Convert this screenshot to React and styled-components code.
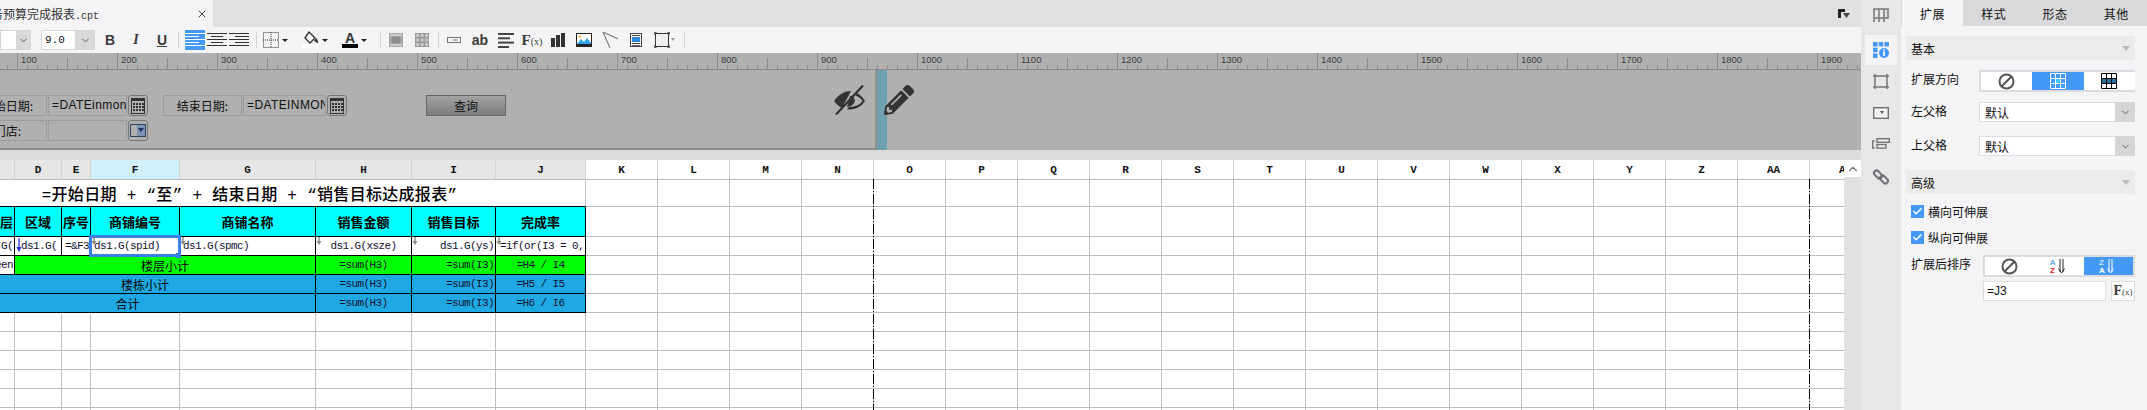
import React from "react";
import styled, { createGlobalStyle } from "styled-components";
import { ChevronDown, ChevronUp, Check, X } from "lucide-react";
import { FaPencilAlt } from "react-icons/fa";

const CJK = `"Noto Sans CJK SC", "Liberation Sans", sans-serif`;
const MONO = `"Liberation Mono", "Noto Sans CJK SC", monospace`;
const BLUE = "#4499f7";

const GlobalStyle = createGlobalStyle`
  html, body { margin: 0; padding: 0; overflow: hidden; }
  body { font-family: ${CJK}; font-size: 12px; color: #111; }
  * { box-sizing: border-box; }
`;

const Page = styled.div`
  display: flex;
  width: 2147px;
  height: 410px;
  overflow: hidden;
  background: #f4f4f7;
`;

const Main = styled.div`
  display: flex;
  flex-direction: column;
  width: 1861px;
  min-width: 0;
`;

/* top tabs */
const TabBar = styled.div`
  display: flex;
  justify-content: space-between;
  align-items: center;
  height: 27px;
  background: #e0e0e3;
  padding-right: 11px;
`;

const FileTab = styled.div`
  display: flex;
  align-items: center;
  width: 213px;
  height: 27px;
  background: #f4f4f7;
  padding-left: 4px;
  overflow: hidden;
  color: #333;
`;

const FileName = styled.span`
  flex: 1;
  margin-left: -13px;
  white-space: nowrap;
  em { font-family: ${MONO}; font-style: normal; font-size: 10px; }
`;

const CloseIcon = styled(X)`
  margin-right: 5px;
  color: #444;
`;

/* toolbar */
const Toolbar = styled.div`
  display: flex;
  align-items: center;
  height: 26px;
  background: #f4f4f7;
`;

const ComboBox = styled.div`
  display: flex;
  height: 20px;
  width: ${p => p.$w}px;
  margin-left: ${p => p.$ml || 0}px;
  background: #fff;
  border: 1px solid #d8d8db;
  align-items: center;
  font-family: ${MONO};
  font-size: 11px;
  padding-left: ${p => (p.$text ? 3 : 0)}px;
`;

const ComboCaret = styled.div`
  display: flex;
  align-items: center;
  justify-content: center;
  width: ${p => p.$w}px;
  height: 20px;
  margin-left: auto;
  margin-right: -1px;
  background: #d8d8db;
  color: #555;
`;

const Slot = styled.div`
  display: flex;
  align-items: center;
  justify-content: center;
  flex: none;
  width: ${p => p.$w}px;
  height: 20px;
  margin-left: ${p => p.$ml || 0}px;
  background: ${p => (p.$active ? BLUE : "transparent")};
  color: #444;
`;

const TextTool = styled.span`
  font-family: ${p => (p.$serif ? `"Liberation Serif", serif` : `"Liberation Sans", sans-serif`)};
  font-weight: ${p => (p.$plain ? 400 : 700)};
  font-style: ${p => (p.$italic ? "italic" : "normal")};
  text-decoration: ${p => (p.$under ? "underline" : "none")};
  font-size: ${p => p.$size || 14}px;
  color: #3a3a3a;
  white-space: nowrap;
`;

const Sep = styled.div`
  flex: none;
  width: 1px;
  height: 16px;
  background: #d2d2d6;
  margin-left: ${p => p.$ml}px;
`;

/* ruler */
const Ruler = styled.div`
  display: flex;
  height: 17px;
  flex: none;
  background: #b0b0b0;
  border-bottom: 1px solid #8c8c8c;
  overflow: hidden;
`;

const RulerMark = styled.div`
  position: relative;
  flex: none;
  width: 100px;
  height: 16px;
  padding: 1px 0 0 3px;
  margin-left: ${p => p.$ml || 0}px;
  border-left: 1px solid #8c8c8c;
  font-family: "Liberation Sans", sans-serif;
  font-size: 9.5px;
  line-height: 11px;
  color: #3c3c3c;
  background: repeating-linear-gradient(90deg, #8c8c8c 0 1px, transparent 1px 10px) 9px 100% / 100% 4px no-repeat;
  &::after {
    content: "";
    position: absolute;
    left: 49px;
    bottom: 0;
    width: 1px;
    height: 11px;
    background: #8c8c8c;
  }
`;

/* parameter pane */
const ParamPane = styled.div`
  display: flex;
  position: relative;
  flex: none;
  height: 80px;
  background: #b0b0b0;
`;

const ParamCanvas = styled.div`
  width: 877px;
  padding-top: 25px;
  border-right: 2px solid #8f8f8f;
  border-bottom: 2px solid #8f8f8f;
  overflow: hidden;
`;

const ParamRow = styled.div`
  display: flex;
  height: 21px;
  gap: 1px;
  margin-left: -32px;
  margin-bottom: 4px;
`;

const ParamLabel = styled.div`
  display: flex;
  align-items: center;
  justify-content: center;
  width: 79px;
  margin-left: ${p => p.$ml || 0}px;
  border: 1px solid #9c9c9c;
`;

const ParamInput = styled.div`
  width: ${p => p.$w}px;
  padding: 0 2px 0 3px;
  border: 1px solid #9c9c9c;
  overflow: hidden;
  white-space: nowrap;
  font-family: "Liberation Sans", sans-serif;
  font-size: 12px;
  letter-spacing: 0.4px;
  line-height: 19px;
`;

const ParamIconButton = styled.div`
  display: flex;
  align-items: center;
  justify-content: center;
  width: 20px;
  border: 1px solid #777;
  border-radius: 3px;
`;

const QueryButton = styled.div`
  display: flex;
  align-items: center;
  justify-content: center;
  width: 80px;
  margin-left: 78px;
  border: 1px solid #666;
  background: linear-gradient(#a2a2a2, #7d7d7d);
`;

const TealStrip = styled.div`
  width: 10px;
  background: #6fa0ae;
`;

const ParamIcon = styled.div`
  position: absolute;
  left: ${p => p.$left}px;
  top: 15px;
  color: #333;
  line-height: 0;
`;

const Gap = styled.div`
  height: 10px;
  flex: none;
  background: #dbdbdd;
`;

/* sheet */
const Sheet = styled.div`
  display: flex;
  flex: 1;
  min-height: 0;
  background: #fff;
  position: relative;
`;

const GridViewport = styled.div`
  position: relative;
  width: 1844px;
  overflow: hidden;
`;

const Grid = styled.div`
  display: grid;
  margin-left: -86px;
  width: max-content;
  grid-template-columns: 26px 35px 40px 47px 29px 89px 136px 96px 84px 90px repeat(18, 72px);
  grid-template-rows: 20px 27px 30px repeat(10, 19px);
`;

const HeadCell = styled.div`
  display: flex;
  align-items: center;
  justify-content: center;
  padding-top: 1px;
  background: ${p => p.$bg};
  border-right: 1px solid #d2d2d2;
  border-bottom: 1px solid #bdbdbd;
  font-family: ${MONO};
  font-size: 11px;
  font-weight: 700;
  color: #111;
`;

const Cell = styled.div`
  position: relative;
  display: flex;
  align-items: center;
  min-width: 0;
  justify-content: ${p => p.$align || "flex-start"};
  grid-column: span ${p => p.$span || 1};
  padding: 0 ${p => (p.$align === "flex-end" ? 1 : 0)}px 0 ${p => (p.$align ? 0 : p.$pad || 3)}px;
  background: ${p => p.$bg || "transparent"};
  border-right: 1px solid ${p => (p.$ink ? "#000" : "#bfbfbf")};
  border-bottom: 1px solid ${p => (p.$ink || p.$inkBelow ? "#000" : "#bfbfbf")};
  font-family: ${MONO};
  font-size: 11px;
  letter-spacing: -0.6px;
  color: #101030;
`;

const CellText = styled.span`
  overflow: hidden;
  white-space: nowrap;
`;

const CjkText = styled.span`
  font-family: ${CJK};
  font-size: ${p => p.$size || 12}px;
  font-weight: ${p => (p.$bold ? 700 : 400)};
  letter-spacing: 0;
  color: #000;
  white-space: nowrap;
`;

const TitleText = styled.span`
  font-family: ${MONO};
  font-size: 16px;
  font-weight: 500;
  letter-spacing: 0.3px;
  color: #000;
  white-space: pre;
`;

const Marker = styled.svg`
  position: absolute;
  z-index: 3;
  left: ${p => p.$left || 0}px;
  top: 0;
`;

const Selection = styled.div`
  position: absolute;
  z-index: 2;
  left: -2px;
  top: -2px;
  right: -2px;
  bottom: -2px;
  border: 3px solid #3a80e8;
  &::after {
    content: "";
    position: absolute;
    right: -3px;
    bottom: -4px;
    width: 5px;
    height: 5px;
    background: #3a80e8;
  }
`;

const PageBreak = styled.div`
  position: absolute;
  z-index: 3;
  left: ${p => p.$left}px;
  top: 19px;
  bottom: 0;
  width: 1px;
  background: repeating-linear-gradient(#000 0 10px, transparent 10px 12px, #000 12px 13px, transparent 13px 15px);
`;

const ScrollBar = styled.div`
  flex: 1;
  background: #e0e0e0;
`;

const ScrollUp = styled.div`
  display: flex;
  align-items: center;
  justify-content: center;
  height: 17px;
  background: #fff;
  color: #777;
`;

/* side icon strip */
const SideStrip = styled.div`
  width: 40px;
  flex: none;
  padding: 0 4px;
  background: #e7e7e8;
`;

const SideItem = styled.div`
  display: flex;
  align-items: center;
  justify-content: center;
  height: 30px;
  margin-top: ${p => p.$mt || 0}px;
  background: ${p => (p.$active ? "#f4f4f7" : "transparent")};
`;

/* right panel */
const Panel = styled.div`
  flex: 1;
  min-width: 0;
  background: #f4f4f7;
`;

const PanelTabs = styled.div`
  display: flex;
  height: 26px;
  background: #d9d9dc;
  padding-left: 1px;
`;

const PanelTab = styled.div`
  flex: 1;
  display: flex;
  align-items: center;
  justify-content: center;
  letter-spacing: 0.5px;
  background: ${p => (p.$active ? "#f4f4f7" : "transparent")};
`;

const PanelBody = styled.div`
  padding: 10px 12px 0 5px;
`;

const SectionBar = styled.div`
  display: flex;
  align-items: center;
  justify-content: space-between;
  height: 24px;
  padding: 0 5px;
  margin-top: ${p => p.$mt || 0}px;
  background: #ebebeb;
  &::after {
    content: "";
    border-left: 4px solid transparent;
    border-right: 4px solid transparent;
    border-top: 5px solid #b9b9bd;
  }
`;

const FieldRow = styled.div`
  display: flex;
  margin-top: ${p => p.$mt}px;
  padding-left: 5px;
`;

const FieldLabel = styled.div`
  flex: none;
  width: ${p => p.$w || 68}px;
  line-height: 18px;
`;

const Segmented = styled.div`
  flex: 1;
  display: flex;
  height: 22px;
  background: #fff;
  border: 2px solid #dcdce0;
  border-right-width: ${p => (p.$open ? 0 : 2)}px;
`;

const Segment = styled.div`
  flex: 1;
  display: flex;
  align-items: center;
  justify-content: center;
  background: ${p => (p.$active ? BLUE : "transparent")};
`;

const SelectBox = styled.div`
  flex: 1;
  display: flex;
  align-items: center;
  height: 20px;
  padding-left: 5px;
  background: #fff;
  border: 1px solid #dcdce0;
  border-right: 0;
`;

const SelectCaret = styled.div`
  display: flex;
  align-items: center;
  justify-content: center;
  width: 20px;
  height: 20px;
  margin-left: auto;
  background: #d5d5d8;
  color: #555;
`;

const CheckRow = styled.div`
  display: flex;
  align-items: center;
  gap: 4px;
  height: 13px;
  margin-top: ${p => p.$mt}px;
  padding-left: 5px;
`;

const CheckMark = styled.div`
  display: flex;
  align-items: center;
  justify-content: center;
  width: 13px;
  height: 13px;
  background: ${BLUE};
  color: #fff;
`;

const FormulaInput = styled.div`
  width: 123px;
  height: 20px;
  padding-left: 3px;
  background: #fff;
  border: 1px solid #dcdce0;
  font-family: "Liberation Sans", sans-serif;
  font-size: 12px;
  line-height: 18px;
`;

const FxButton = styled.div`
  display: flex;
  align-items: center;
  justify-content: center;
  width: 24px;
  height: 20px;
  margin-left: 5px;
  background: #fff;
  border: 1px solid #dcdce0;
`;

const HEAD = "ABCDEFGHIJKLMNOPQRSTUVWXYZ".split("").concat(["AA", "AB"]);

const tail = row =>
  HEAD.slice(10).map(c => <Cell key={`${row}${c}`} />);

const blankRow = row => HEAD.map(c => <Cell key={`${row}${c}`} />);

const headBg = (c, i) => {
  if (c === "F") return "#ceeffb";
  return i < 10 ? "#e6e6e6" : "#fff";
};

const GrayArrow = ({ left }) => (
  <Marker $left={left} width="6" height="9" viewBox="0 0 6 9">
    <path d="M3 0v5" stroke="#888" strokeWidth="1.4" />
    <path d="M0.5 4h5L3 8z" fill="#888" />
  </Marker>
);

const BlueArrow = () => (
  <Marker $left={1} width="6" height="16" viewBox="0 0 6 16">
    <path d="M3 1v10" stroke="#1c2fe0" strokeWidth="1.2" />
    <path d="M0.5 10h5L3 15z" fill="#1c2fe0" />
  </Marker>
);

const BanIcon = () => (
  <svg width="17" height="17" viewBox="0 0 17 17" fill="none" stroke="#555" strokeWidth="2">
    <circle cx="8.5" cy="8.5" r="7" />
    <path d="M3.7 13.3L13.3 3.7" />
  </svg>
);

const MiniGrid = ({ line, cell, row }) => (
  <svg width="16" height="16" viewBox="0 0 16 16">
    {row && <rect x="0" y="5" width="16" height="5" fill={cell} />}
    {!row && <rect x="5" y="5" width="6" height="6" fill={cell} />}
    <path d="M.5.5h15v15H.5zM5.5 0v16M10.5 0v16M0 5.5h16M0 10.5h16" fill="none" stroke={line} />
  </svg>
);

const SortIcon = ({ top, bottom, arrow, underline }) => (
  <svg width="18" height="16" viewBox="0 0 18 16">
    <text x="0" y="7" fontFamily="Liberation Sans" fontSize="8" fill={top}>{underline ? "A" : "Z"}</text>
    <text x="0" y="15" fontFamily="Liberation Sans" fontSize="8" fontWeight="700" fill={bottom}>{underline ? "Z" : "A"}</text>
    <path d="M10 1v13M13 1v13M8.5 10.5l3 4.5 3-4.5" fill="none" stroke={arrow} strokeWidth="1" />
  </svg>
);

const CalendarIcon = () => (
  <svg width="14" height="16" viewBox="0 0 14 16">
    <rect x=".5" y=".5" width="13" height="15" fill="none" stroke="#333" />
    <rect x="0" y="0" width="14" height="3" fill="#333" />
    {[5, 8, 11].map(y =>
      [2, 5, 8, 11].map(x => <rect key={`${x}${y}`} x={x} y={y} width="2" height="2" fill="#333" />)
    )}
  </svg>
);

const DropIcon = () => (
  <svg width="16" height="13" viewBox="0 0 16 13">
    <rect x=".5" y=".5" width="15" height="12" fill="none" stroke="#2d4464" />
    <rect x="7" y="1" width="8" height="11" fill="#7d93b4" />
    <path d="M8 4h6l-3 4z" fill="#1d2f6c" />
  </svg>
);

const EyeOff = () => (
  <svg width="33" height="30" viewBox="0 0 33 30">
    <path d="M1 16C6 9 12 6 18 6l-9 17C6 21.500 3 19 1 16z" fill="#333" />
    <path d="M22 7c4 1.500 7.500 4.500 10 9-3.500 5.500-9 8.500-15 8.500-1 0-2 0-3-.3l2-2.500c6 .5 11-2 13.500-5.700-1.500-2.500-4-4.500-7-5.500z" fill="#333" />
    <path d="M3 29.500L30 .5" stroke="#333" strokeWidth="2.200" />
    <path d="M17 11a6 6 0 0 1 5 5 8 8 0 0 1-4 5l-4 1z" fill="#333" />
  </svg>
);

const BorderTool = () => (
  <svg width="16" height="16" viewBox="0 0 16 16" fill="none" stroke="#333" strokeDasharray="1 1">
    <path d="M.5.5h15v15H.5zM8 0v16M0 8h16" />
  </svg>
);

const SmallCaret = () => (
  <svg width="6" height="3" viewBox="0 0 6 3"><path d="M0 0h6L3 3z" fill="#222" /></svg>
);

const PaintTool = () => (
  <svg width="17" height="18" viewBox="0 0 17 18">
    <rect x="0" y="13" width="16" height="4" fill="#fff" />
    <path d="M7 1l6 6-5 5-5-5z" fill="none" stroke="#333" strokeWidth="1.400" />
    <path d="M8 2l6 5c2 2 2.500 4 2 5-1.500 0-3-2-4-2l2-3z" fill="#333" />
  </svg>
);

const ColorA = () => (
  <svg width="16" height="16" viewBox="0 0 16 16">
    <text x="8" y="11" textAnchor="middle" fontFamily="Liberation Sans" fontWeight="700" fontSize="14" fill="#333">A</text>
    <rect x="0" y="12" width="16" height="4" fill="#000" />
  </svg>
);

const AlignLines = ({ mode, color }) => {
  const widths = [20, 14, 20, 14, 20];
  return (
    <svg width="20" height="14" viewBox="0 0 20 14">
      {widths.map((w, i) => {
        const wide = mode === "center" ? (i % 2 ? 12 : 20) : w;
        const x = mode === "right" ? 20 - wide : mode === "center" ? (20 - wide) / 2 : 0;
        return <rect key={i} x={x} y={i * 3} width={wide} height="1" fill={color} />;
      })}
    </svg>
  );
};

const MergeTool = () => (
  <svg width="14" height="14" viewBox="0 0 14 14">
    <rect width="14" height="14" fill="#a4a4a4" />
    <rect x="1" y="1" width="12" height="2" fill="#cfcfcf" />
    <rect x="1" y="11" width="12" height="2" fill="#cfcfcf" />
    <rect x="3" y="4" width="8" height="6" fill="#8c8c8c" />
  </svg>
);

const GridTool = () => (
  <svg width="14" height="14" viewBox="0 0 14 14">
    <rect width="14" height="14" fill="#999" />
    {[1, 5.500, 10].map(y =>
      [1, 5.500, 10].map(x => <rect key={`${x}${y}`} x={x} y={y} width="3" height="3" fill="#c8c8c8" />)
    )}
  </svg>
);

const FieldTool = () => (
  <svg width="14" height="6" viewBox="0 0 14 6" fill="none" stroke="#777">
    <rect x=".5" y=".5" width="13" height="5" />
    <path d="M6 3h5" />
  </svg>
);

const LinesTool = () => (
  <svg width="16" height="15" viewBox="0 0 16 15" fill="#444">
    <rect width="16" height="2" />
    <rect y="4.300" width="12" height="2" />
    <rect y="8.600" width="16" height="2" />
    <rect y="13" width="11" height="2" />
  </svg>
);

const BarsTool = () => (
  <svg width="14" height="14" viewBox="0 0 14 14" fill="#333">
    <rect y="5" width="4" height="9" />
    <rect x="5" y="2" width="4" height="12" />
    <rect x="10" width="4" height="14" />
  </svg>
);

const ImageTool = () => (
  <svg width="16" height="14" viewBox="0 0 16 14">
    <rect width="16" height="14" fill="#222" />
    <rect x="1" y="1" width="14" height="10" fill="#fff" />
    <path d="M1 11l4-5 3 3 3-4 4 5v1H1z" fill="#2aa5ee" />
    <circle cx="4" cy="3.500" r="1.300" fill="#f5c33a" />
  </svg>
);

const SlantTool = () => (
  <svg width="16" height="16" viewBox="0 0 16 16" fill="none" stroke="#808080" strokeWidth="1.200">
    <path d="M1 0l15 7M1 0l7 16" />
  </svg>
);

const DocTool = () => (
  <svg width="12" height="14" viewBox="0 0 12 14">
    <rect x=".5" y=".5" width="11" height="13" fill="#fff" stroke="#444" />
    <rect x="2" y="2" width="8" height="1" fill="#444" />
    <rect x="2" y="4" width="8" height="5" fill="#2d87d8" />
    <rect x="2" y="10" width="8" height="1" fill="#444" />
    <rect x="2" y="12" width="8" height=".8" fill="#444" />
  </svg>
);

const FrameTool = () => (
  <svg width="21" height="16" viewBox="0 0 21 16">
    <path d="M1.500 1.500h13v13h-13z" fill="#f0f0f0" stroke="#333" />
    <path d="M0 1h3M13 1h3M0 15h3M13 15h3M1 0v3M15 0v3M1 13v3M15 13v3" stroke="#333" />
    <path d="M17 6h4l-2 3z" fill="#999" />
  </svg>
);

const PanelLayoutIcon = () => (
  <svg width="16" height="15" viewBox="0 0 16 15" fill="none" stroke="#777" strokeWidth="1.500">
    <path d="M1 14V1h14v9H1M6 1v13M11 1v13" />
  </svg>
);

const CellInfoIcon = () => (
  <svg width="16" height="16" viewBox="0 0 16 16">
    <g fill={BLUE}>
      <rect width="4.500" height="4.500" />
      <rect x="5.700" width="4.500" height="4.500" />
      <rect x="11.400" width="4.500" height="4.500" />
      <rect y="5.700" width="4.500" height="4.500" />
      <rect y="11.400" width="4.500" height="4.500" />
      <circle cx="11" cy="11" r="5" />
    </g>
    <rect x="10.200" y="9.500" width="1.700" height="4.500" fill="#fff" />
    <rect x="10.200" y="7.300" width="1.700" height="1.500" fill="#fff" />
  </svg>
);

const CropIcon = () => (
  <svg width="16" height="15" viewBox="0 0 16 15" fill="none" stroke="#777" strokeWidth="1.500">
    <path d="M2 2h12v11H2zM0 2h2M14 2h2M0 13h2M14 13h2M2 0v2M14 0v2M2 13v2M14 13v2" />
  </svg>
);

const WidgetIcon = () => (
  <svg width="16" height="12" viewBox="0 0 16 12">
    <rect x=".7" y=".7" width="14.600" height="10.600" fill="#f2f2f2" stroke="#6f6f75" strokeWidth="1.400" />
    <path d="M7 4h4L9 7z" fill="#555" />
  </svg>
);

const LayoutIcon = () => (
  <svg width="18" height="12" viewBox="0 0 18 12" fill="none" stroke="#6f6f75" strokeWidth="1.300">
    <path d="M2.500 3H.7v7h1.800" />
    <rect x="5" y=".7" width="12.300" height="3.600" />
    <rect x="5" y="6.500" width="9" height="3.600" />
  </svg>
);

const ChainIcon = () => (
  <svg width="16" height="16" viewBox="0 0 16 16" fill="none" stroke="#6f6f75" strokeWidth="2">
    <rect x="0.500" y="3" width="9" height="5" rx="2.500" transform="rotate(45 5 5.500)" />
    <rect x="6.500" y="8" width="9" height="5" rx="2.500" transform="rotate(45 11 10.500)" />
  </svg>
);

const MaxIcon = () => (
  <svg width="12" height="9" viewBox="0 0 12 9">
    <path d="M0 0h7v3H3v6H0z" fill="#222" />
    <path d="M5 4h7L8.500 9z" fill="#444" />
  </svg>
);

const Fx = ({ size }) => (
  <TextTool $serif $size={size}>F<TextTool $serif $plain $size={size - 5}>(x)</TextTool></TextTool>
);

const App = () => (
  <Page>
    <GlobalStyle />
    <Main>
      <TabBar>
        <FileTab>
          <FileName>务预算完成报表<em>.cpt</em></FileName>
          <CloseIcon size={12} />
        </FileTab>
        <MaxIcon />
      </TabBar>

      <Toolbar>
        <ComboBox $w={31}>
          <ComboCaret $w={15}><ChevronDown size={11} /></ComboCaret>
        </ComboBox>
        <ComboBox $w={54} $ml={10} $text>
          9.0
          <ComboCaret $w={20}><ChevronDown size={11} /></ComboCaret>
        </ComboBox>
        <Slot $w={26} $ml={2}><TextTool>B</TextTool></Slot>
        <Slot $w={26}><TextTool $italic $serif>I</TextTool></Slot>
        <Slot $w={26}><TextTool $under>U</TextTool></Slot>
        <Sep $ml={3} />
        <Slot $w={20} $ml={6} $active><AlignLines color="#fff" /></Slot>
        <Slot $w={20} $ml={2}><AlignLines mode="center" color="#333" /></Slot>
        <Slot $w={20} $ml={2}><AlignLines mode="right" color="#333" /></Slot>
        <Sep $ml={7} />
        <Slot $w={16} $ml={6}><BorderTool /></Slot>
        <Slot $w={11}><SmallCaret /></Slot>
        <Slot $w={17} $ml={12}><PaintTool /></Slot>
        <Slot $w={11}><SmallCaret /></Slot>
        <Slot $w={16} $ml={12}><ColorA /></Slot>
        <Slot $w={12}><SmallCaret /></Slot>
        <Sep $ml={10} />
        <Slot $w={14} $ml={8}><MergeTool /></Slot>
        <Slot $w={14} $ml={12}><GridTool /></Slot>
        <Sep $ml={9} />
        <Slot $w={14} $ml={8}><FieldTool /></Slot>
        <Slot $w={14} $ml={12}><TextTool $size={14}>ab</TextTool></Slot>
        <Slot $w={16} $ml={11}><LinesTool /></Slot>
        <Slot $w={16} $ml={10}><Fx size={15} /></Slot>
        <Slot $w={14} $ml={11}><BarsTool /></Slot>
        <Slot $w={16} $ml={11}><ImageTool /></Slot>
        <Slot $w={16} $ml={10}><SlantTool /></Slot>
        <Slot $w={12} $ml={12}><DocTool /></Slot>
        <Slot $w={21} $ml={12}><FrameTool /></Slot>
        <Sep $ml={9} />
      </Toolbar>

      <Ruler>
        {Array.from({ length: 20 }, (_, i) => (
          <RulerMark key={i} $ml={i === 0 ? -83 : 0}>{i === 0 ? "" : i * 100}</RulerMark>
        ))}
      </Ruler>

      <ParamPane>
        <ParamCanvas>
          <ParamRow>
            <ParamLabel>开始日期:</ParamLabel>
            <ParamInput $w={79}>=DATEinmon</ParamInput>
            <ParamIconButton><CalendarIcon /></ParamIconButton>
            <ParamLabel $ml={14}>结束日期:</ParamLabel>
            <ParamInput $w={83}>=DATEINMONTH</ParamInput>
            <ParamIconButton><CalendarIcon /></ParamIconButton>
            <QueryButton>查询</QueryButton>
          </ParamRow>
          <ParamRow>
            <ParamLabel>门店:</ParamLabel>
            <ParamInput $w={79} />
            <ParamIconButton><DropIcon /></ParamIconButton>
          </ParamRow>
        </ParamCanvas>
        <TealStrip />
        <ParamIcon $left={833}><EyeOff /></ParamIcon>
        <ParamIcon $left={884}><FaPencilAlt size={30} /></ParamIcon>
      </ParamPane>

      <Gap />

      <Sheet>
        <GridViewport>
          <Grid>
            {HEAD.map((c, i) => <HeadCell key={c} $bg={headBg(c, i)}>{c}</HeadCell>)}

            <Cell $span={10} $align="center" $inkBelow>
              <TitleText>{"=开始日期 + “至” + 结束日期 + “销售目标达成报表”"}</TitleText>
            </Cell>
            {tail("t")}

            <Cell $span={2} $ink $bg="#0ff" />
            <Cell $ink $bg="#0ff" $align="flex-end"><CjkText $size={13} $bold>楼层</CjkText></Cell>
            {["区域", "序号", "商铺编号", "商铺名称", "销售金额", "销售目标", "完成率"].map(t => (
              <Cell key={t} $ink $bg="#0ff" $align="center"><CjkText $size={13} $bold>{t}</CjkText></Cell>
            ))}
            {tail("h")}

            <Cell $span={2} $ink $bg="#fff" />
            <Cell $ink $bg="#fff" $align="flex-end"><CellText>ds1.G(</CellText></Cell>
            <Cell $ink $bg="#fff" $pad={6}><BlueArrow /><CellText>ds1.G(</CellText></Cell>
            <Cell $ink $bg="#fff"><CellText>=&amp;F3</CellText></Cell>
            <Cell $ink $bg="#fff"><GrayArrow /><CellText>ds1.G(spid)</CellText><Selection /></Cell>
            <Cell $ink $bg="#fff"><GrayArrow /><CellText>ds1.G(spmc)</CellText></Cell>
            <Cell $ink $bg="#fff" $align="center"><GrayArrow /><CellText>ds1.G(xsze)</CellText></Cell>
            <Cell $ink $bg="#fff" $align="flex-end"><GrayArrow /><CellText>ds1.G(ys)</CellText></Cell>
            <Cell $ink $bg="#fff" $pad={4}><GrayArrow /><CellText>=if(or(I3 = 0, 0, H3 / I3))</CellText></Cell>
            {tail("d")}

            <Cell $span={2} $ink $bg="#fff" />
            <Cell $ink $bg="#fff" $align="flex-end"><CellText>Green</CellText></Cell>
            <Cell $span={4} $ink $bg="#0f0" $align="center"><CjkText>楼层小计</CjkText></Cell>
            <Cell $ink $bg="#0f0" $align="center"><CellText>=sum(H3)</CellText></Cell>
            <Cell $ink $bg="#0f0" $align="flex-end"><CellText>=sum(I3)</CellText></Cell>
            <Cell $ink $bg="#0f0" $align="center"><CellText>=H4 / I4</CellText></Cell>
            {tail("f")}

            <Cell $span={2} $ink $bg="#1fa9e4" />
            <Cell $span={5} $ink $bg="#1fa9e4" $align="center"><CjkText>楼栋小计</CjkText></Cell>
            <Cell $ink $bg="#1fa9e4" $align="center"><CellText>=sum(H3)</CellText></Cell>
            <Cell $ink $bg="#1fa9e4" $align="flex-end"><CellText>=sum(I3)</CellText></Cell>
            <Cell $ink $bg="#1fa9e4" $align="center"><CellText>=H5 / I5</CellText></Cell>
            {tail("g")}

            <Cell $ink $bg="#1fa9e4" />
            <Cell $span={6} $ink $bg="#1fa9e4" $align="center"><CjkText>合计</CjkText></Cell>
            <Cell $ink $bg="#1fa9e4" $align="center"><CellText>=sum(H3)</CellText></Cell>
            <Cell $ink $bg="#1fa9e4" $align="flex-end"><CellText>=sum(I3)</CellText></Cell>
            <Cell $ink $bg="#1fa9e4" $align="center"><CellText>=H6 / I6</CellText></Cell>
            {tail("s")}

            {[0, 1, 2, 3, 4, 5].map(r => blankRow(`b${r}`))}
          </Grid>
          <PageBreak $left={873} />
          <PageBreak $left={1809} />
        </GridViewport>
        <ScrollBar>
          <ScrollUp><ChevronUp size={14} /></ScrollUp>
        </ScrollBar>
      </Sheet>
    </Main>

    <SideStrip>
      <SideItem><PanelLayoutIcon /></SideItem>
      <SideItem $mt={5} $active><CellInfoIcon /></SideItem>
      <SideItem $mt={1}><CropIcon /></SideItem>
      <SideItem $mt={2}><WidgetIcon /></SideItem>
      <SideItem $mt={1}><LayoutIcon /></SideItem>
      <SideItem $mt={3}><ChainIcon /></SideItem>
    </SideStrip>

    <Panel>
      <PanelTabs>
        <PanelTab $active>扩展</PanelTab>
        <PanelTab>样式</PanelTab>
        <PanelTab>形态</PanelTab>
        <PanelTab>其他</PanelTab>
      </PanelTabs>
      <PanelBody>
        <SectionBar>基本</SectionBar>
        <FieldRow $mt={10}>
          <FieldLabel>扩展方向</FieldLabel>
          <Segmented $open>
            <Segment><BanIcon /></Segment>
            <Segment $active><MiniGrid line="#fff" cell="#3cc8f5" /></Segment>
            <Segment><MiniGrid line="#000" cell="#2d6f9c" row /></Segment>
          </Segmented>
        </FieldRow>
        <FieldRow $mt={10}>
          <FieldLabel>左父格</FieldLabel>
          <SelectBox>默认<SelectCaret><ChevronDown size={11} /></SelectCaret></SelectBox>
        </FieldRow>
        <FieldRow $mt={14}>
          <FieldLabel>上父格</FieldLabel>
          <SelectBox>默认<SelectCaret><ChevronDown size={11} /></SelectCaret></SelectBox>
        </FieldRow>
        <SectionBar $mt={14}>高级</SectionBar>
        <CheckRow $mt={11}><CheckMark><Check size={11} strokeWidth={3} /></CheckMark>横向可伸展</CheckRow>
        <CheckRow $mt={13}><CheckMark><Check size={11} strokeWidth={3} /></CheckMark>纵向可伸展</CheckRow>
        <FieldRow $mt={11}>
          <FieldLabel $w={72}>扩展后排序</FieldLabel>
          <Segmented>
            <Segment><BanIcon /></Segment>
            <Segment><SortIcon top="#2d87d8" bottom="#e8141c" arrow="#222" underline /></Segment>
            <Segment $active><SortIcon top="#fff" bottom="#fff" arrow="#fff" /></Segment>
          </Segmented>
        </FieldRow>
        <FieldRow $mt={4}>
          <FieldLabel $w={72} />
          <FormulaInput>=J3</FormulaInput>
          <FxButton><Fx size={14} /></FxButton>
        </FieldRow>
      </PanelBody>
    </Panel>
  </Page>
);

export default App;
